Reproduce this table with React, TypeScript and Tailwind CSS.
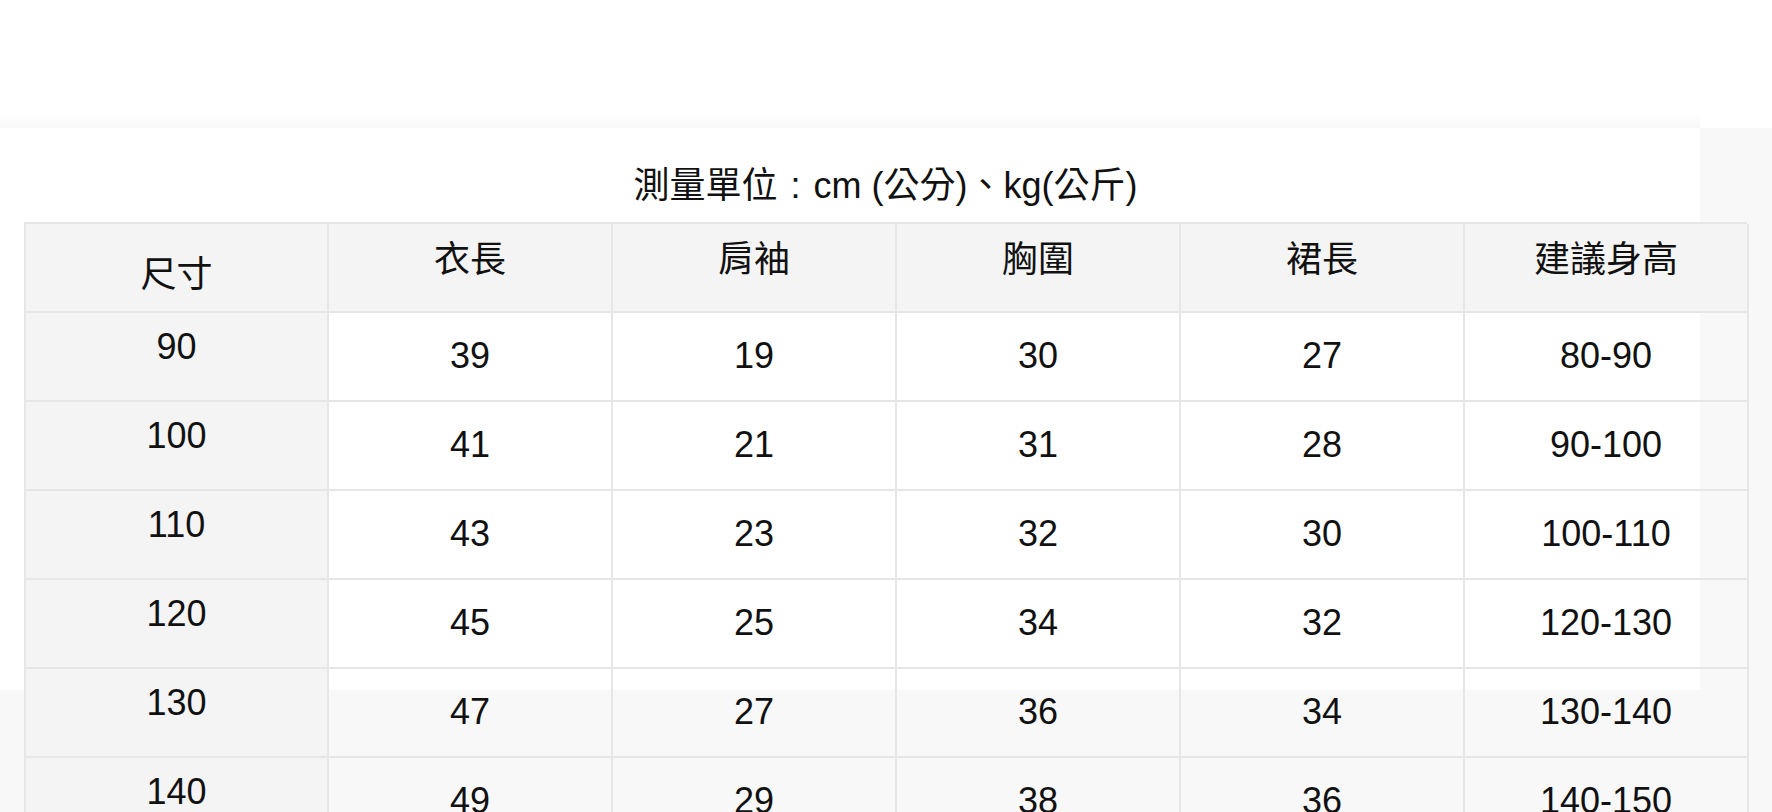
const headers = ["衣長", "肩袖", "胸圍", "裙長", "建議身高"];

const rows = [
  ["90", "39", "19", "30", "27", "80-90"],
  ["100", "41", "21", "31", "28", "90-100"],
  ["110", "43", "23", "32", "30", "100-110"],
  ["120", "45", "25", "34", "32", "120-130"],
  ["130", "47", "27", "36", "34", "130-140"],
  ["140", "49", "29", "38", "36", "140-150"],
];

export default function App() {
  return (
    <div
      lang="zh-TW"
      className="min-h-screen bg-[#f8f8f8] text-[#111]"
      style={{ fontFamily: '"Liberation Sans", "Noto Sans CJK TC", sans-serif' }}
    >
      <header className="flex h-[128px] flex-col justify-end bg-white">
        <div className="h-[14px] w-[1700px] bg-linear-to-b from-white to-[#f7f7f7]" />
      </header>

      <main className="h-[562px] w-[1700px] bg-white pt-[30px]">
        <div className="ml-[24px] w-[1723px]">
          <h2 className="text-center text-[36px] leading-[56px] font-normal">
            測量單位<span className="inline-block w-[36px] text-center">:</span>cm (公分)、kg(公斤)
          </h2>

          <div className="mt-[8px] grid grid-cols-[303px_repeat(5,284px)] border-t-2 border-l-2 border-[#e6e6e6] text-[36px] leading-none">
            <div className="flex h-[89px] items-center justify-center border-r-2 border-b-2 border-[#e6e6e6] bg-[#f4f4f4] pt-[14px]">
              尺寸
            </div>
            {headers.map((h) => (
              <div
                key={h}
                className="flex h-[89px] items-center justify-center border-r-2 border-b-2 border-[#e6e6e6] bg-[#f4f4f4] pb-[15px]"
              >
                {h}
              </div>
            ))}

            {rows.map((row) =>
              row.map((cell, i) =>
                i === 0 ? (
                  <div
                    key={row[0] + "-" + i}
                    className="flex h-[89px] items-center justify-center border-r-2 border-b-2 border-[#e6e6e6] bg-[#f4f4f4] pb-[19px]"
                  >
                    {cell}
                  </div>
                ) : (
                  <div
                    key={row[0] + "-" + i}
                    className="flex h-[89px] items-center justify-center border-r-2 border-b-2 border-[#e6e6e6] pb-[2px]"
                  >
                    {cell}
                  </div>
                )
              )
            )}
          </div>
        </div>
      </main>
    </div>
  );
}
